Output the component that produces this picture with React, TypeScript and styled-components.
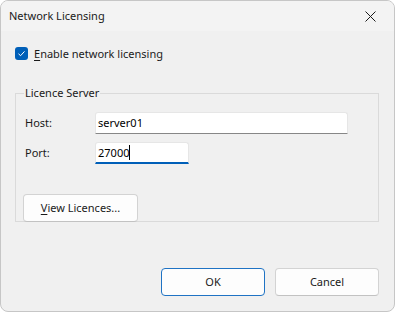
import React from 'react';
import styled, { createGlobalStyle } from 'styled-components';

const GlobalStyle = createGlobalStyle`
    html, body {
        margin: 0;
        padding: 0;
        background: #ffffff;
    }
    body {
        font-family: 'Noto Sans', 'Liberation Sans', sans-serif;
        font-size: 11px;
        color: #1a1a1a;
    }
`;

const DialogWindow = styled.div`
    box-sizing: border-box;
    width: 395px;
    height: 312px;
    border: 1px solid #c6c6c6;
    border-radius: 8px;
    background-color: #f0f0f0;
    overflow: hidden;
    display: flex;
    flex-direction: column;
`;

const TitleBar = styled.div`
    height: 30px;
    flex-shrink: 0;
    display: flex;
    align-items: center;
    padding: 0 0 0 8px;
    background-color: #f3f3f3;
    span {
        line-height: 16px;
        margin-top: -1px;
    }
`;

const CloseButton = styled.div`
    margin-left: auto;
    width: 46px;
    height: 30px;
    display: flex;
    align-items: center;
    justify-content: center;
    margin-right: 1px;
`;

const Body = styled.div`
    flex: 1;
    display: flex;
    flex-direction: column;
    padding: 16px 15px 15px 14px;
`;

const CheckRow = styled.label`
    display: flex;
    align-items: center;
    gap: 6px;
    height: 13px;
    line-height: 16px;
`;

const CheckBox = styled.span`
    width: 13px;
    height: 13px;
    border-radius: 3px;
    background-color: #005fb8;
    display: flex;
    align-items: center;
    justify-content: center;
`;

const Mnemonic = styled.span`
    text-decoration: underline;
    text-underline-offset: 2px;
`;

const GroupBox = styled.fieldset`
    margin: 25px 0 0 0;
    padding: 11px 9px 6px 9px;
    border: 1px solid #dadada;
    height: 137px;
    box-sizing: border-box;
    min-width: 0;
    legend {
        padding: 0 1px;
        margin-left: -1px;
        line-height: 16px;
    }
`;

const FieldGrid = styled.div`
    display: grid;
    grid-template-columns: 70px auto;
    row-gap: 8px;
    align-items: center;
    justify-items: start;
`;

const FieldLabel = styled.span`
    line-height: 16px;
`;

const TextBox = styled.div<{ $width: number; $focused?: boolean }>`
    box-sizing: border-box;
    width: ${(p) => p.$width}px;
    height: 22px;
    background-color: #ffffff;
    border: 1px solid #e6e6e6;
    border-bottom: ${(p) => (p.$focused ? '2px solid #005fb8' : '1px solid #878787')};
    border-radius: 3px 3px 0 0;
    padding: 0 3px 0 2px;
    display: flex;
    align-items: center;
    line-height: 16px;
    color: #000000;
`;

const Caret = styled.span`
    display: inline-block;
    width: 1px;
    height: 15px;
    background-color: #000000;
`;

const PushButton = styled.button<{ $width: number; $isDefault?: boolean }>`
    box-sizing: border-box;
    width: ${(p) => p.$width}px;
    height: 28px;
    border-radius: 4px;
    background-color: #fdfdfd;
    border: 1px solid ${(p) => (p.$isDefault ? '#1f73c4' : '#d3d3d3')};
    border-bottom-color: ${(p) => (p.$isDefault ? '#1f73c4' : '#c2c2c2')};
    font-family: inherit;
    font-size: 11px;
    color: #1a1a1a;
    padding: 0;
    line-height: 16px;
`;

const ViewButton = styled(PushButton)`
    margin-top: 30px;
    margin-left: -2px;
`;

const ButtonBar = styled.div`
    margin-top: auto;
    display: flex;
    justify-content: flex-end;
    gap: 10px;
`;

export default function App() {
    return (
        <>
            <GlobalStyle />
            <DialogWindow>
                <TitleBar>
                    <span>Network Licensing</span>
                    <CloseButton>
                        <svg width="11" height="11" viewBox="0 0 11 11">
                            <path d="M0.5 0.5 L10.5 10.5 M10.5 0.5 L0.5 10.5" stroke="#1a1a1a" strokeWidth="1" />
                        </svg>
                    </CloseButton>
                </TitleBar>
                <Body>
                    <CheckRow>
                        <CheckBox>
                            <svg width="9" height="9" viewBox="0 0 9 9">
                                <path d="M1.5 4.8 L3.6 6.7 L7.5 2.4" stroke="#ffffff" strokeWidth="1" fill="none" />
                            </svg>
                        </CheckBox>
                        <span>
                            <Mnemonic>E</Mnemonic>nable network licensing
                        </span>
                    </CheckRow>
                    <GroupBox>
                        <legend>Licence Server</legend>
                        <FieldGrid>
                            <FieldLabel>Host:</FieldLabel>
                            <TextBox $width={253}>server01</TextBox>
                            <FieldLabel>Port:</FieldLabel>
                            <TextBox $width={94} $focused>
                                27000
                                <Caret />
                            </TextBox>
                        </FieldGrid>
                        <ViewButton $width={115}>
                            <Mnemonic>V</Mnemonic>iew Licences...
                        </ViewButton>
                    </GroupBox>
                    <ButtonBar>
                        <PushButton $width={104} $isDefault>
                            OK
                        </PushButton>
                        <PushButton $width={104}>Cancel</PushButton>
                    </ButtonBar>
                </Body>
            </DialogWindow>
        </>
    );
}
